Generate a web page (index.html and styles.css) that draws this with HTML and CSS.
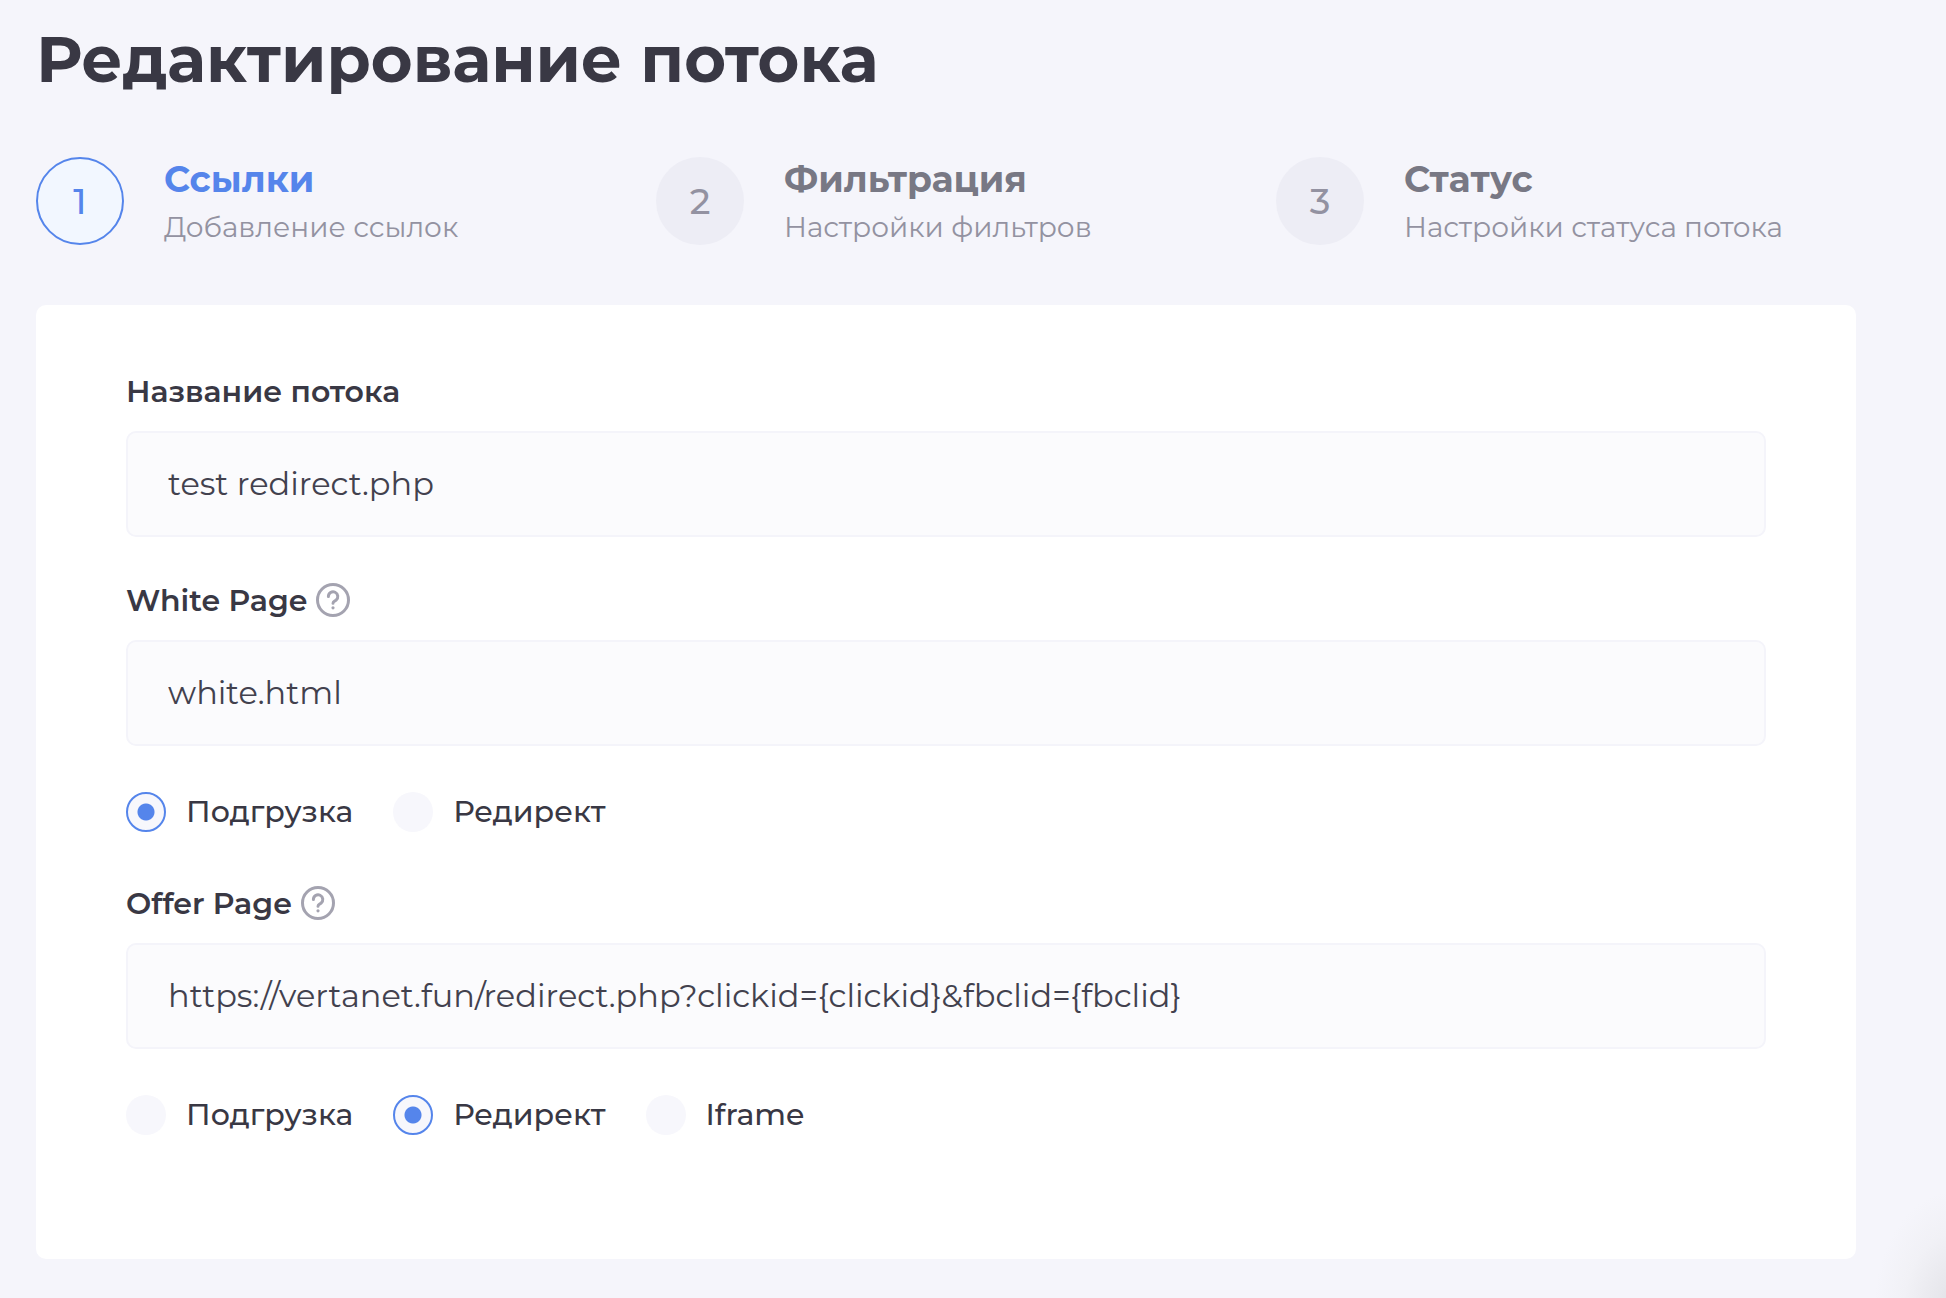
FILE: index.html
```html
<!DOCTYPE html>
<html lang="ru">
<head>
<meta charset="utf-8">
<meta name="viewport" content="width=device-width, initial-scale=1">
<title>Редактирование потока</title>
<link rel="stylesheet" href="styles.css">
</head>
<body>
<main class="page">
  <h1 class="page-title">Редактирование потока</h1>

  <ol class="steps">
    <li class="step step-active" aria-current="step">
      <span class="step-number">1</span>
      <div class="step-text">
        <h2 class="step-title">Ссылки</h2>
        <p class="step-note">Добавление ссылок</p>
      </div>
    </li>
    <li class="step">
      <span class="step-number">2</span>
      <div class="step-text">
        <h2 class="step-title">Фильтрация</h2>
        <p class="step-note">Настройки фильтров</p>
      </div>
    </li>
    <li class="step">
      <span class="step-number">3</span>
      <div class="step-text">
        <h2 class="step-title">Статус</h2>
        <p class="step-note">Настройки статуса потока</p>
      </div>
    </li>
  </ol>

  <form class="card">
    <div class="field">
      <div class="field-head"><label class="field-label" for="name">Название потока</label></div>
      <input class="field-input" id="name" type="text" value="test redirect.php">
    </div>

    <div class="field">
      <div class="field-head">
        <label class="field-label" for="white">White Page</label>
        <button class="help" type="button" aria-label="White Page: ?">
          <svg class="help-icon" viewBox="0 0 34 34" fill="none" stroke="currentColor" stroke-width="3" stroke-linecap="round">
            <circle cx="17" cy="17" r="15.5"/>
            <path d="M12.4 13.6a4.7 4.7 0 1 1 7.6 3.6c-1.8 1.2-3 1.5-3 3"/>
            <circle cx="17" cy="24.8" r="1.6" fill="currentColor" stroke="none"/>
          </svg>
        </button>
      </div>
      <input class="field-input" id="white" type="text" value="white.html">
      <div class="options">
        <label class="option"><input class="radio" type="radio" name="white-mode" checked>Подгрузка</label>
        <label class="option"><input class="radio" type="radio" name="white-mode">Редирект</label>
      </div>
    </div>

    <div class="field">
      <div class="field-head">
        <label class="field-label" for="offer">Offer Page</label>
        <button class="help" type="button" aria-label="Offer Page: ?">
          <svg class="help-icon" viewBox="0 0 34 34" fill="none" stroke="currentColor" stroke-width="3" stroke-linecap="round">
            <circle cx="17" cy="17" r="15.5"/>
            <path d="M12.4 13.6a4.7 4.7 0 1 1 7.6 3.6c-1.8 1.2-3 1.5-3 3"/>
            <circle cx="17" cy="24.8" r="1.6" fill="currentColor" stroke="none"/>
          </svg>
        </button>
      </div>
      <input class="field-input" id="offer" type="text" value="https://vertanet.fun/redirect.php?clickid={clickid}&amp;fbclid={fbclid}">
      <div class="options">
        <label class="option"><input class="radio" type="radio" name="offer-mode">Подгрузка</label>
        <label class="option"><input class="radio" type="radio" name="offer-mode" checked>Редирект</label>
        <label class="option"><input class="radio" type="radio" name="offer-mode">Iframe</label>
      </div>
    </div>
  </form>
</main>
</body>
</html>
```
FILE: styles.css
```css
* {
  box-sizing: border-box;
}

body {
  margin: 0;
  min-height: 100vh;
  color: #393844;
  font-family: Montserrat, Inter, "Liberation Sans", sans-serif;
  font-size: 30px;
  background: radial-gradient(ellipse 84px 120px at calc(100% + 12px) calc(100% + 12px), #dcdce0, #e7e7ec 25%, #f1f1f6 65%, #f5f5fb) #f5f5fb;
}

.page {
  padding: 19px 90px 38px 36px;
}

.page-title {
  margin: 0;
  font-size: 64px;
  line-height: 80px;
  font-weight: 700;
}

.steps {
  display: grid;
  grid-template-columns: repeat(3, 1fr);
  gap: 40px;
  margin: 58px 0 60px;
  padding: 0;
  list-style: none;
}

.step {
  display: flex;
  gap: 40px;
  color: #787884;
}

.step-number {
  display: flex;
  flex: none;
  align-items: center;
  justify-content: center;
  width: 88px;
  height: 88px;
  border-radius: 50%;
  background: #ededf5;
  color: #9392a1;
  font-size: 36px;
  font-weight: 500;
}

.step-title {
  margin: 0;
  font-size: 36px;
  line-height: 44px;
  font-weight: 700;
}

.step-note {
  margin: 4px 0 0;
  color: #9392a1;
  font-size: 28px;
  line-height: 44px;
}

.step-text {
  height: 88px;
}

.step-active .step-title {
  color: #5585eb;
}

.step-active .step-number {
  border: 2px solid #5585eb;
  background: #f2f7ff;
  color: #5585eb;
}

.card {
  display: flex;
  flex-direction: column;
  gap: 46px;
  padding: 69px 90px 116px;
  border-radius: 10px;
  background: #fff;
}

.field-head {
  display: flex;
  align-items: flex-start;
  gap: 9px;
  height: 36px;
  margin-bottom: 21px;
}

.field-label {
  font-weight: 600;
  line-height: 36px;
}

.help {
  display: flex;
  padding: 0;
  border: 0;
  background: none;
  color: #a4a3b0;
}

.help-icon {
  width: 34px;
  height: 34px;
}

.field-input {
  display: block;
  width: 100%;
  height: 106px;
  padding: 0 40px 2px;
  border: 2px solid #f4f4fa;
  border-radius: 10px;
  background: #fbfbfd;
  color: #42414e;
  font: 400 32px Montserrat, Inter, "Liberation Sans", sans-serif;
}

.options {
  display: flex;
  flex-wrap: wrap;
  gap: 40px;
  margin: 46px 0 8px;
}

.option {
  display: flex;
  align-items: center;
  gap: 20px;
  font-weight: 500;
  line-height: 40px;
}

.radio {
  width: 40px;
  height: 40px;
  margin: 0;
  border-radius: 50%;
  background: #f7f7fc;
  appearance: none;
}

.radio:checked {
  border: 2px solid #5585eb;
  background: radial-gradient(circle, #5585eb 8px, #f7f7fc 9px);
}
```
